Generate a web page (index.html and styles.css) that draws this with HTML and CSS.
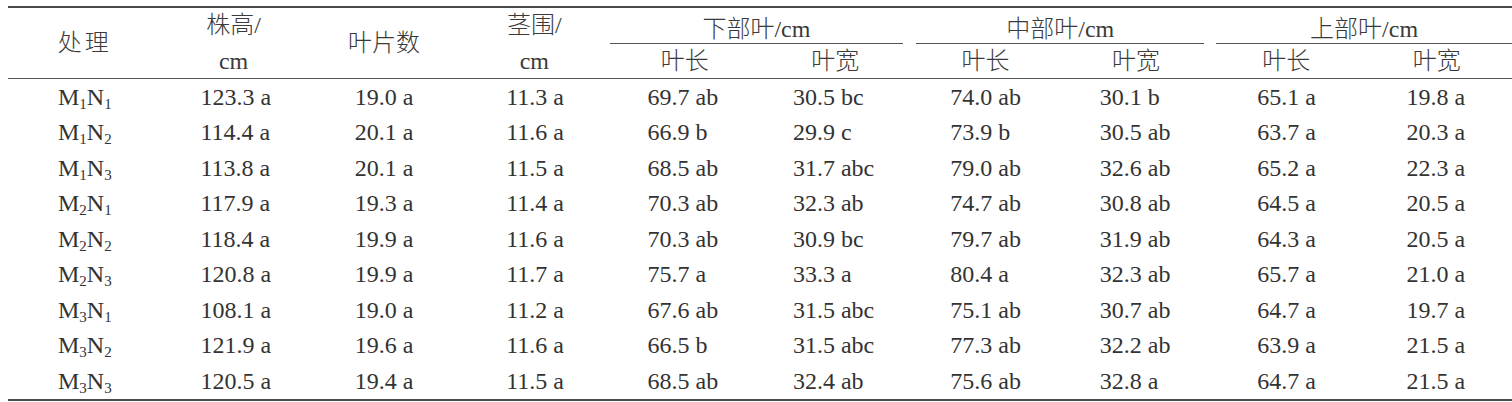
FILE: index.html
```html
<!DOCTYPE html>
<html>
<head>
<meta charset="utf-8">
<title>处理结果表</title>
<link rel="stylesheet" href="styles.css">
</head>
<body>
<table class="data">
  <colgroup>
    <col class="c"><col class="c"><col class="c"><col class="c"><col class="c">
    <col class="c"><col class="c"><col class="c"><col class="c"><col class="c">
  </colgroup>
  <thead>
    <tr class="hr1">
      <th rowspan="2" class="span2 wide">处理</th>
      <th class="top">株高/</th>
      <th rowspan="2" class="span2">叶片数</th>
      <th class="top">茎围/</th>
      <th colspan="2" class="group"><div class="glabel g-low">下部叶/cm</div></th>
      <th colspan="2" class="group"><div class="glabel g-mid">中部叶/cm</div></th>
      <th colspan="2" class="group"><div class="glabel g-up">上部叶/cm</div></th>
    </tr>
    <tr class="hr2">
      <th>cm</th>
      <th>cm</th>
      <th>叶长</th><th>叶宽</th>
      <th>叶长</th><th>叶宽</th>
      <th>叶长</th><th>叶宽</th>
    </tr>
  </thead>
  <tbody>
    <tr><td>M<sub>1</sub>N<sub>1</sub></td><td>123.3 a</td><td>19.0 a</td><td>11.3 a</td><td>69.7 ab</td><td>30.5 bc</td><td>74.0 ab</td><td>30.1 b</td><td>65.1 a</td><td>19.8 a</td></tr>
    <tr><td>M<sub>1</sub>N<sub>2</sub></td><td>114.4 a</td><td>20.1 a</td><td>11.6 a</td><td>66.9 b</td><td>29.9 c</td><td>73.9 b</td><td>30.5 ab</td><td>63.7 a</td><td>20.3 a</td></tr>
    <tr><td>M<sub>1</sub>N<sub>3</sub></td><td>113.8 a</td><td>20.1 a</td><td>11.5 a</td><td>68.5 ab</td><td>31.7 abc</td><td>79.0 ab</td><td>32.6 ab</td><td>65.2 a</td><td>22.3 a</td></tr>
    <tr><td>M<sub>2</sub>N<sub>1</sub></td><td>117.9 a</td><td>19.3 a</td><td>11.4 a</td><td>70.3 ab</td><td>32.3 ab</td><td>74.7 ab</td><td>30.8 ab</td><td>64.5 a</td><td>20.5 a</td></tr>
    <tr><td>M<sub>2</sub>N<sub>2</sub></td><td>118.4 a</td><td>19.9 a</td><td>11.6 a</td><td>70.3 ab</td><td>30.9 bc</td><td>79.7 ab</td><td>31.9 ab</td><td>64.3 a</td><td>20.5 a</td></tr>
    <tr><td>M<sub>2</sub>N<sub>3</sub></td><td>120.8 a</td><td>19.9 a</td><td>11.7 a</td><td>75.7 a</td><td>33.3 a</td><td>80.4 a</td><td>32.3 ab</td><td>65.7 a</td><td>21.0 a</td></tr>
    <tr><td>M<sub>3</sub>N<sub>1</sub></td><td>108.1 a</td><td>19.0 a</td><td>11.2 a</td><td>67.6 ab</td><td>31.5 abc</td><td>75.1 ab</td><td>30.7 ab</td><td>64.7 a</td><td>19.7 a</td></tr>
    <tr><td>M<sub>3</sub>N<sub>2</sub></td><td>121.9 a</td><td>19.6 a</td><td>11.6 a</td><td>66.5 b</td><td>31.5 abc</td><td>77.3 ab</td><td>32.2 ab</td><td>63.9 a</td><td>21.5 a</td></tr>
    <tr><td>M<sub>3</sub>N<sub>3</sub></td><td>120.5 a</td><td>19.4 a</td><td>11.5 a</td><td>68.5 ab</td><td>32.4 ab</td><td>75.6 ab</td><td>32.8 a</td><td>64.7 a</td><td>21.5 a</td></tr>
  </tbody>
</table>
</body>
</html>
```
FILE: styles.css
```css
html, body {
  background: #ffffff;
}
body {
  margin: 6px 0 0 8px;
  font-family: "Liberation Serif", "Noto Sans CJK SC", serif;
  font-size: 24px;
  color: #333333;
}
.data {
  width: 1504px;
  table-layout: fixed;
  border-collapse: collapse;
  border-spacing: 0;
  font-family: "Liberation Serif", "Noto Sans CJK SC", serif;
}
.data col.c {
  width: 150.4px;
}
.data thead {
  border-top: 2px solid #4a4a4a;
  border-bottom: 1px solid #555555;
}
.data tbody {
  border-bottom: 2px solid #4a4a4a;
}
.data th {
  font-weight: 300;
  padding: 0;
  text-align: center;
  line-height: 28px;
  color: #3a3a3a;
}
.data th.wide {
  letter-spacing: 3px;
  text-indent: 3px;
}
.hr1 th {
  height: 33px;
  vertical-align: middle;
}
.hr1 th.top {
  vertical-align: top;
  padding-top: 3px;
}
.hr1 th.span2 {
  vertical-align: middle;
}
.hr2 th {
  height: 34px;
  vertical-align: middle;
}
.data th.group {
  vertical-align: bottom;
}
.glabel {
  border-bottom: 1px solid #555555;
  line-height: 28px;
  padding-top: 4px;
}
.g-low { margin: 0 7px 0 0; }
.g-mid { margin: 0 7px 0 6px; }
.g-up  { margin: 0 0 0 5px; }

.data td {
  height: 35.5px;
  padding: 0;
  text-align: left;
  vertical-align: middle;
  line-height: 28px;
  white-space: nowrap;
  font-family: "Liberation Serif", serif;
}
.data td sub {
  font-size: 15px;
  vertical-align: -4px;
  line-height: 0;
}
.data td:nth-child(1)  { padding-left: 50px; }
.data td:nth-child(2)  { padding-left: 42px; }
.data td:nth-child(3)  { padding-left: 46px; }
.data td:nth-child(4)  { padding-left: 47px; }
.data td:nth-child(5)  { padding-left: 38px; }
.data td:nth-child(6)  { padding-left: 33px; }
.data td:nth-child(7)  { padding-left: 40px; }
.data td:nth-child(8)  { padding-left: 39px; }
.data td:nth-child(9)  { padding-left: 46px; }
.data td:nth-child(10) { padding-left: 45px; }
```
